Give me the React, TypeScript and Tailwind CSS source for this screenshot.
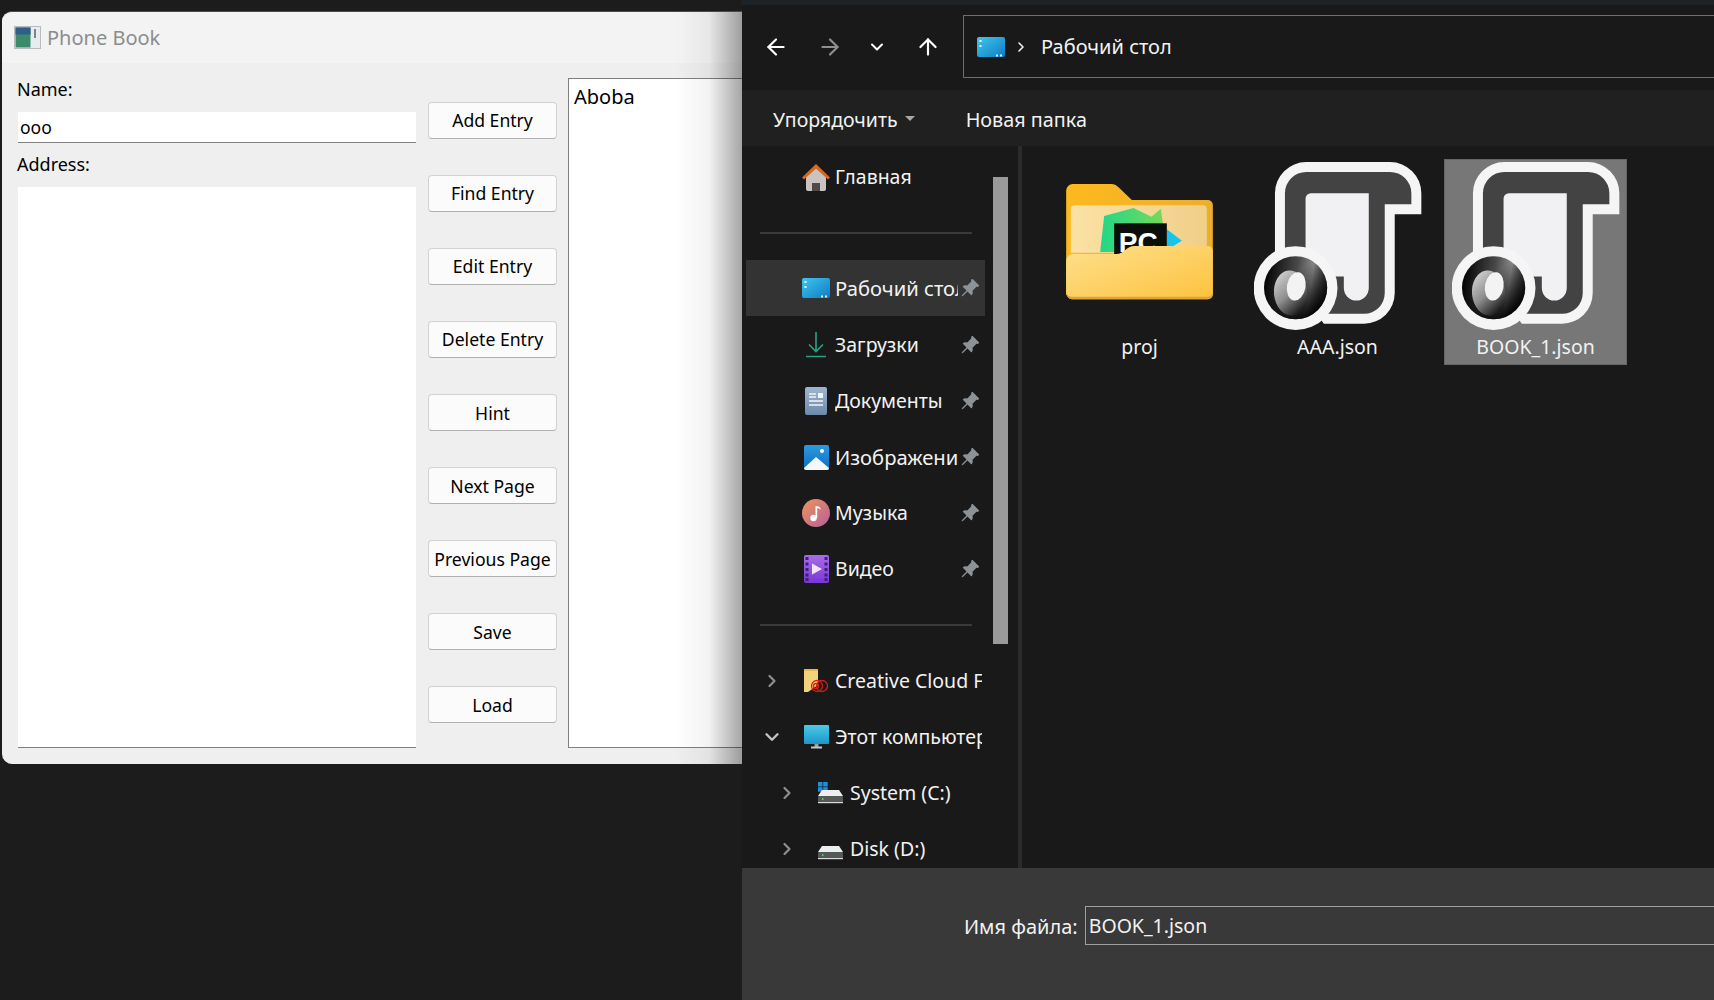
import { ArrowLeft, ArrowRight, ArrowUp, ChevronDown, ChevronRight } from "lucide-react";
import { BsPinAngleFill } from "react-icons/bs";
import type { ReactNode } from "react";

const buttons = ["Add Entry", "Find Entry", "Edit Entry", "Delete Entry", "Hint", "Next Page", "Previous Page", "Save", "Load"];

function DesktopIcon() {
  return (
    <svg width="28" height="22" viewBox="0 0 28 22">
      <defs>
        <linearGradient id="desk" x1="0" y1="0" x2="1" y2="1">
          <stop offset="0" stopColor="#3fc6ee" />
          <stop offset="1" stopColor="#0f7cc4" />
        </linearGradient>
      </defs>
      <rect width="28" height="20" y="1" rx="2" fill="url(#desk)" />
      <rect x="2.5" y="4" width="2" height="2" fill="#fff" />
      <rect x="2.5" y="9" width="2" height="2" fill="#fff" />
      <rect x="19" y="18.5" width="2" height="2" fill="#d8f0ff" />
      <rect x="23" y="18.5" width="2" height="2" fill="#d8f0ff" />
    </svg>
  );
}

function HomeIcon() {
  return (
    <svg width="28" height="27" viewBox="0 0 28 27">
      <path d="M4 13 14 4l10 9v12a2 2 0 0 1-2 2h-4v-8h-8v8H6a2 2 0 0 1-2-2Z" fill="#c9c4c0" />
      <path d="M10 19h8v8h-8Z" fill="#4f4a46" />
      <path d="M0 13.5 14 0l14 13.5-2 2L14 4.5 2 15.5Z" fill="#d9691e" />
    </svg>
  );
}

function DownloadIcon() {
  return (
    <svg width="20" height="26" viewBox="0 0 20 26" fill="none" stroke="#2aa184" strokeWidth="1.6">
      <path d="M10 0v19M3 12.5l7 7 7-7M0 24.5h20" />
    </svg>
  );
}

function DocsIcon() {
  return (
    <svg width="22" height="28" viewBox="0 0 22 28">
      <defs>
        <linearGradient id="doc" x1="0" y1="0" x2="0" y2="1">
          <stop offset="0" stopColor="#9fb6cf" />
          <stop offset="1" stopColor="#6d8aab" />
        </linearGradient>
      </defs>
      <rect width="22" height="28" rx="2" fill="url(#doc)" />
      <path d="M4 7h7M4 10h7M4 14h14M4 18h14" stroke="#f1f5f9" strokeWidth="1.3" />
      <rect x="13" y="6" width="5" height="5" fill="#f1f5f9" />
    </svg>
  );
}

function PicturesIcon() {
  return (
    <svg width="25" height="25" viewBox="0 0 25 25">
      <defs>
        <linearGradient id="pic" x1="0" y1="0" x2="0" y2="1">
          <stop offset="0" stopColor="#2d9be0" />
          <stop offset="1" stopColor="#0d6cc2" />
        </linearGradient>
      </defs>
      <rect width="25" height="25" rx="2" fill="url(#pic)" />
      <circle cx="18" cy="6" r="2" fill="#fff" />
      <path d="M0 23 12 12l13 11v0a2 2 0 0 1-2 2H2a2 2 0 0 1-2-2Z" fill="#f4f8fc" />
    </svg>
  );
}

function MusicIcon() {
  return (
    <svg width="28" height="28" viewBox="0 0 28 28">
      <defs>
        <linearGradient id="mus" x1="0" y1="0" x2="1" y2="1">
          <stop offset="0" stopColor="#f0945a" />
          <stop offset="1" stopColor="#b45f9e" />
        </linearGradient>
      </defs>
      <circle cx="14" cy="14" r="14" fill="url(#mus)" />
      <circle cx="11.5" cy="19" r="3.2" fill="#fff" />
      <path d="M13.5 19V7c3 0 5 1 5.5 3.5-1.5-1-3-1.3-3.8-1.3V19Z" fill="#fff" />
    </svg>
  );
}

function VideoIcon() {
  return (
    <svg width="25" height="28" viewBox="0 0 25 28">
      <defs>
        <linearGradient id="vid" x1="0" y1="0" x2="0" y2="1">
          <stop offset="0" stopColor="#a86ee8" />
          <stop offset="1" stopColor="#7a35d8" />
        </linearGradient>
      </defs>
      <rect width="25" height="28" rx="2" fill="url(#vid)" />
      {[2, 7.5, 13, 18.5, 23].map((y) => (
        <g key={y} fill="#3d1e78">
          <rect x="1.5" y={y} width="3" height="3" />
          <rect x="20.5" y={y} width="3" height="3" />
        </g>
      ))}
      <path d="M8 8.5 18 14 8 19.5Z" fill="#efe6fb" />
    </svg>
  );
}

function CreativeIcon() {
  return (
    <svg width="24" height="24" viewBox="0 0 24 24">
      <path d="M0 0h14v16l-10 7H0Z" fill="#f3d27a" />
      <path d="M0 0h14v2H0Z" fill="#e5b84e" />
      <g fill="none" stroke="#d81f12" strokeWidth="1.3">
        <circle cx="13" cy="17" r="5.5" />
        <circle cx="18" cy="17" r="5.5" />
        <circle cx="12" cy="17" r="2.5" />
      </g>
    </svg>
  );
}

function ComputerIcon() {
  return (
    <svg width="25" height="24" viewBox="0 0 25 24">
      <defs>
        <linearGradient id="pc" x1="0" y1="0" x2="0" y2="1">
          <stop offset="0" stopColor="#4cc8e8" />
          <stop offset="1" stopColor="#1d97c8" />
        </linearGradient>
      </defs>
      <rect width="25" height="19" fill="url(#pc)" rx="1" />
      <rect x="10.5" y="19" width="4" height="3" fill="#9aa0a6" />
      <rect x="7" y="21.5" width="11" height="2" fill="#c4c8cc" />
    </svg>
  );
}

function DriveIcon({ windows = false }: { windows?: boolean }) {
  return (
    <svg width="25" height="22" viewBox="0 0 25 22" className="-ml-[2px]">
      {windows && (
        <g fill="#1d8fe0">
          <rect x="0" y="0" width="4.5" height="4.5" />
          <rect x="5.2" y="0" width="4.5" height="4.5" />
          <rect x="0" y="5.2" width="4.5" height="4.5" />
          <rect x="5.2" y="5.2" width="4.5" height="4.5" />
        </g>
      )}
      <path d="M4 8h17l4 6H0Z" fill="#eceff1" />
      <rect y="14" width="25" height="7" rx="1" fill="#565a56" />
      <rect y="20" width="25" height="1.2" fill="#d8dadb" />
      <rect x="4" y="16" width="1.5" height="2" fill="#41d35a" />
    </svg>
  );
}

function FolderIcon() {
  return (
    <svg width="147" height="116" viewBox="78 102 440 348">
      <defs>
        <linearGradient id="front" x1="0" y1="0" x2="1" y2="1">
          <stop offset="0" stopColor="#fde08d" />
          <stop offset="1" stopColor="#fdc23e" />
        </linearGradient>
        <linearGradient id="paper" x1="0" y1="0" x2="1" y2="0">
          <stop offset="0" stopColor="#fbe1a4" />
          <stop offset="1" stopColor="#f0cf88" />
        </linearGradient>
        <linearGradient id="pcg" x1="0" y1="0" x2="1" y2="0">
          <stop offset="0" stopColor="#21d789" />
          <stop offset="1" stopColor="#7dd957" />
        </linearGradient>
        <linearGradient id="back" x1="0" y1="0" x2="1" y2="0">
          <stop offset="0" stopColor="#fdb91f" />
          <stop offset="1" stopColor="#ecae2e" />
        </linearGradient>
      </defs>
      <path d="M78 122a20 20 0 0 1 20-20h115a30 30 0 0 1 22 10l40 38h228a15 15 0 0 1 15 15v270H78Z" fill="url(#back)" />
      <path d="M92 178a12 12 0 0 1 12-12h384a12 12 0 0 1 12 12v130H92Z" fill="url(#paper)" />
      <path d="M380 238l45 34-45 28Z" fill="#14c3ee" />
      <path d="M192 198l88-24 54 26 28-24 18 130H180Z" fill="url(#pcg)" />
      <rect x="222" y="220" width="158" height="100" fill="#0a0f0a" />
      <text x="236" y="306" fontFamily="Liberation Sans, sans-serif" fontWeight="700" fontSize="84" fill="#fff">PC</text>
      <path d="M78 332a20 20 0 0 1 20-20h130c25 0 30-24 55-24h220a15 15 0 0 1 15 15v130a15 15 0 0 1-15 15H98a20 20 0 0 1-20-20Z" fill="url(#front)" />
      <path d="M78 428a20 20 0 0 0 20 20h405a15 15 0 0 0 15-15v-8a15 15 0 0 1-15 15H98a20 20 0 0 1-20-12Z" fill="#dba53a" />
    </svg>
  );
}

function JsonIcon({ id }: { id: string }) {
  return (
    <svg width="168" height="168" viewBox="40 36 505 505">
      <defs>
        <linearGradient id={`${id}-ring`} x1="0" y1="0.3" x2="1" y2="0.45">
          <stop offset="0" stopColor="#000" />
          <stop offset="0.5" stopColor="#4a4a4a" />
          <stop offset="0.75" stopColor="#8c8c8c" />
          <stop offset="1" stopColor="#2a2a2a" />
        </linearGradient>
        <linearGradient id={`${id}-low`} x1="0.3" y1="0.4" x2="0.7" y2="1">
          <stop offset="0" stopColor="#000" stopOpacity="0" />
          <stop offset="1" stopColor="#000" stopOpacity="1" />
        </linearGradient>
        <linearGradient id={`${id}-in`} x1="0.2" y1="0" x2="0.75" y2="1">
          <stop offset="0" stopColor="#d4d4d4" />
          <stop offset="0.5" stopColor="#8e8e8e" />
          <stop offset="1" stopColor="#0a0a0a" />
        </linearGradient>
      </defs>
      <path d="M103 320V130a94 94 0 0 1 94-94h252a94 94 0 0 1 94 94v63h-80v237a92 92 0 0 1-92 92H250Z" fill="#f5f5f5" />
      <path d="M133 320V130a64 64 0 0 1 64-64h252a64 64 0 0 1 64 64v33h-80v267a62 62 0 0 1-62 62H250Z" fill="#434343" />
      <path d="M195 320V146a16 16 0 0 1 16-16h174v285a37 37 0 0 1-75 0v-35H195Z" fill="#f1f1f3" />
      <circle cx="165" cy="415" r="126" fill="#f5f5f5" />
      <circle cx="165" cy="414" r="95" fill={`url(#${id}-ring)`} />
      <circle cx="165" cy="414" r="95" fill={`url(#${id}-low)`} />
      <ellipse cx="150" cy="430" rx="50" ry="68" fill={`url(#${id}-in)`} transform="rotate(-6 150 430)" />
      <ellipse cx="167" cy="410" rx="28" ry="43" fill="#f3f3f3" transform="rotate(10 167 410)" />
    </svg>
  );
}

function NavRow({
  icon,
  label,
  pinned,
  selected,
  large,
  level = 0,
  chevron,
}: {
  icon: ReactNode;
  label: string;
  pinned?: boolean;
  selected?: boolean;
  large?: boolean;
  level?: number;
  chevron?: "right" | "down";
}) {
  return (
    <div className={`flex h-14 shrink-0 items-center pr-[3px] ${selected ? "bg-[#333333]" : ""} ${level ? "pl-[15px]" : ""}`}>
      <div className="flex w-[52px] shrink-0 justify-center text-[#8f8f8f]">
        {chevron === "right" && <ChevronRight size={20} strokeWidth={2.6} />}
        {chevron === "down" && <ChevronDown size={22} strokeWidth={2.6} className="text-[#c4c4c4]" />}
      </div>
      <div className="flex w-9 shrink-0 justify-center">{icon}</div>
      <div className={`ml-[1px] min-w-0 flex-1 overflow-hidden whitespace-nowrap leading-[30px] text-[#f2f2f2] ${large ? "text-[20.2px]" : "text-[19.5px]"}`}>{label}</div>
      {pinned && <BsPinAngleFill size={20} className="mx-[2px] shrink-0 text-[#8d9297]" />}
    </div>
  );
}

function PhoneBook() {
  return (
    <div className="relative ml-[2px] mt-[11px] flex h-[753px] flex-col overflow-hidden rounded-l-[10px] border-t border-[#4a4a4a] bg-[#efefef] font-['Noto_Sans',sans-serif] text-black">
      <div className="flex h-[51px] shrink-0 items-center bg-[#f3f3f3] pl-[12px]">
        <svg width="27" height="23" viewBox="0 0 27 23">
          <rect width="27" height="23" fill="#b8bcc0" />
          <rect x="1" y="1" width="25" height="21" fill="#e8ecee" />
          <rect x="1.5" y="1.5" width="15" height="20" fill="#3b8a6c" />
          <rect x="1.5" y="1.5" width="15" height="7" fill="#2f5f88" />
          <rect x="20" y="3" width="2" height="9" fill="#7a8590" />
        </svg>
        <span className="ml-[6px] text-[20px] leading-none text-[#8c8c8c]">Phone Book</span>
      </div>
      <div className="flex flex-1 pb-[16px] pl-[16px] pt-[15px]">
        <div className="flex w-[398px] shrink-0 flex-col">
          <label className="-ml-px -mt-px h-6 text-[18px] leading-6">Name:</label>
          <input
            readOnly
            value="ooo"
            className="mt-[11px] h-[31px] w-full border-b border-[#808080] bg-white pl-[2px] text-[17.5px] outline-none"
          />
          <label className="-ml-px mt-[9px] h-6 text-[18px] leading-6">Address:</label>
          <textarea readOnly className="mt-[11px] w-full flex-1 resize-none border-b border-[#808080] bg-white outline-none" />
        </div>
        <div className="ml-[12px] flex w-[129px] shrink-0 flex-col gap-[36.1px] pt-[23.5px]">
          {buttons.map((b) => (
            <button
              key={b}
              className="h-[37px] rounded-[4px] border border-[#d2d2d2] border-b-[#b0b0b0] bg-[#fbfbfb] pt-[2px] text-[17.6px] leading-none"
            >
              {b}
            </button>
          ))}
        </div>
        <div className="ml-[11px] flex-1 border-y border-l border-[#808080] bg-white pl-[5px] pt-[2px] text-[20px] leading-[32px]">Aboba</div>
      </div>
      {/* shadow of the dialog on top */}
      <div className="pointer-events-none absolute inset-y-0 right-0 w-[66px] bg-gradient-to-r from-black/0 via-black/[0.05] to-black/35" />
    </div>
  );
}

function FileTile({ label, icon, selected }: { label: string; icon: ReactNode; selected?: boolean }) {
  return (
    <div className={`flex h-[206px] w-[183px] shrink-0 flex-col items-center border pt-[2px] ${selected ? "border-[#666666] bg-[#777777]" : "border-transparent"}`}>
      <div className="h-[168px]">{icon}</div>
      <div className="mt-[2px] text-[19.5px] leading-[30px]">{label}</div>
    </div>
  );
}

function Explorer() {
  return (
    <div className="flex h-[1000px] min-w-0 flex-1 flex-col overflow-hidden bg-[#191919] font-['Noto_Sans',sans-serif] text-[#f2f2f2]">
      <div className="h-[5px] shrink-0 bg-[#1e2327]" />
      <div className="flex h-[85px] shrink-0 items-start pt-[10px]">
        <div className="flex h-[63px] w-[221px] shrink-0 items-center pt-[1px] text-white">
          <ArrowLeft size={26} strokeWidth={2} className="ml-[21px]" />
          <ArrowRight size={26} strokeWidth={2} className="ml-[28px] text-[#8f8f8f]" />
          <ChevronDown size={20} strokeWidth={2.4} className="ml-[24px]" />
          <ArrowUp size={26} strokeWidth={2} className="ml-[28px]" />
        </div>
        <div className="flex h-[63px] flex-1 items-center border border-r-0 border-[#6e6e6e] pl-[13px] pt-[1px]">
          <DesktopIcon />
          <ChevronRight size={16} strokeWidth={2.4} className="ml-[8px]" />
          <span className="ml-[12px] text-[20px]">Рабочий стол</span>
        </div>
      </div>
      <div className="flex h-[56px] shrink-0 items-center bg-[#202020] pl-[31px] pt-[3px] text-[19.5px]">
        <span>Упорядочить</span>
        <svg width="10" height="6" viewBox="0 0 10 6" className="mb-[2px] ml-[7px]">
          <path d="M0 0h10L5 5Z" fill="#a8a8a8" />
        </svg>
        <span className="ml-[51px] text-[19.8px]">Новая папка</span>
      </div>
      <div className="flex min-h-0 flex-1">
        <div className="ml-[4px] flex w-[239px] shrink-0 flex-col overflow-hidden pt-[3px]">
          <NavRow icon={<HomeIcon />} label="Главная" />
          <div className="flex h-[55px] shrink-0 items-center pl-[14px] pr-[13px]">
            <div className="h-[2px] w-full bg-[#3a3a3a]" />
          </div>
          <NavRow icon={<DesktopIcon />} label="Рабочий стол" pinned selected large />
          <div className="h-[1px] shrink-0" />
          <NavRow icon={<DownloadIcon />} label="Загрузки" pinned />
          <NavRow icon={<DocsIcon />} label="Документы" pinned />
          <NavRow icon={<PicturesIcon />} label="Изображения" pinned large />
          <NavRow icon={<MusicIcon />} label="Музыка" pinned />
          <NavRow icon={<VideoIcon />} label="Видео" pinned />
          <div className="flex h-14 shrink-0 items-center pl-[14px] pr-[13px]">
            <div className="h-[2px] w-full bg-[#3a3a3a]" />
          </div>
          <NavRow icon={<CreativeIcon />} label="Creative Cloud Files" chevron="right" />
          <NavRow icon={<ComputerIcon />} label="Этот компьютер" chevron="down" />
          <NavRow icon={<DriveIcon windows />} label="System (C:)" chevron="right" level={1} />
          <NavRow icon={<DriveIcon />} label="Disk (D:)" chevron="right" level={1} />
        </div>
        <div className="ml-[8px] mt-[31px] h-[467px] w-[15px] shrink-0 bg-[#9a9a9a]" />
        <div className="ml-[10px] w-[4px] shrink-0 bg-[#2b2b2b]" />
        <div className="flex flex-1 gap-[15px] pl-[26px] pt-[13px]">
          <FileTile label="proj" icon={<div className="mt-[22px]"><FolderIcon /></div>} />
          <FileTile label="AAA.json" icon={<JsonIcon id="aaa" />} />
          <FileTile label="BOOK_1.json" icon={<JsonIcon id="book" />} selected />
        </div>
      </div>
      <div className="flex h-[132px] shrink-0 items-start bg-[#393939] pl-[222px] pt-[38px]">
        <label className="h-[39px] text-[20px] leading-[42px]">Имя файла:</label>
        <input
          readOnly
          value="BOOK_1.json"
          className="ml-[7px] h-[39px] flex-1 border border-r-0 border-[#a0a0a0] bg-transparent pl-[3px] text-[19.5px] text-[#f2f2f2] outline-none"
        />
      </div>
    </div>
  );
}

export default function App() {
  return (
    <div className="flex h-[1000px] w-[1714px] overflow-hidden bg-[#1c1c1c]">
      <div className="w-[742px] shrink-0">
        <PhoneBook />
      </div>
      <Explorer />
    </div>
  );
}
